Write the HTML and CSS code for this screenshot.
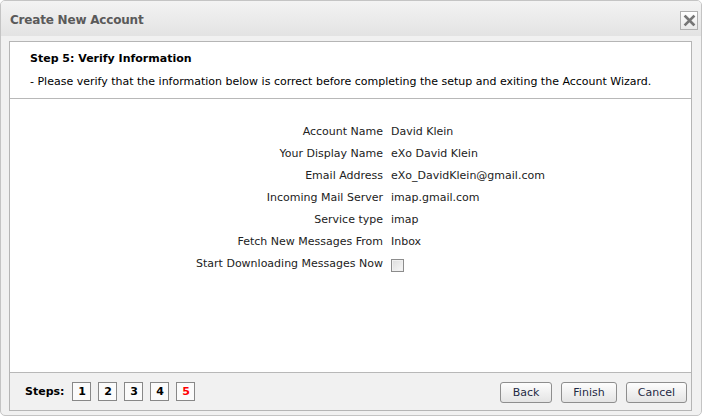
FILE: index.html
```html
<!DOCTYPE html>
<html>
<head>
<meta charset="utf-8">
<link rel="stylesheet" href="styles.css">
</head>
<body>
<div class="window">
  <div class="titlebar">
    <span class="title">Create New Account</span>
    <button class="close" aria-label="Close">
      <svg width="13" height="13" viewBox="0 0 13 13"><path d="M2.5 2.5 L10.5 10.5 M10.5 2.5 L2.5 10.5" stroke="#767676" stroke-width="2.6" stroke-linecap="square"/></svg>
    </button>
  </div>
  <div class="body">
    <div class="panel">
      <div class="head">
        <div class="step-title">Step 5: Verify Information</div>
        <div class="step-desc">- Please verify that the information below is correct before completing the setup and exiting the Account Wizard.</div>
      </div>
      <div class="content">
        <div class="form">
          <div class="lbl">Account Name</div><div class="val">David Klein</div>
          <div class="lbl">Your Display Name</div><div class="val">eXo David Klein</div>
          <div class="lbl">Email Address</div><div class="val">eXo_DavidKlein@gmail.com</div>
          <div class="lbl">Incoming Mail Server</div><div class="val">imap.gmail.com</div>
          <div class="lbl">Service type</div><div class="val">imap</div>
          <div class="lbl">Fetch New Messages From</div><div class="val">Inbox</div>
          <div class="lbl">Start Downloading Messages Now</div><div class="val"><span class="check"></span></div>
        </div>
      </div>
      <div class="footer">
        <div class="steps">
          <span class="steps-label">Steps:</span>
          <span class="step">1</span>
          <span class="step">2</span>
          <span class="step">3</span>
          <span class="step">4</span>
          <span class="step current">5</span>
        </div>
        <div class="buttons">
          <button class="btn btn-back">Back</button>
          <button class="btn btn-finish">Finish</button>
          <button class="btn btn-cancel">Cancel</button>
        </div>
      </div>
    </div>
  </div>
</div>
</body>
</html>
```
FILE: styles.css
```css
html, body {
  margin: 0;
  padding: 0;
  background: #ffffff;
}
body {
  font-family: "DejaVu Sans", Verdana, sans-serif;
  font-size: 11px;
  color: #000;
}
.window {
  width: 700px;
  height: 414px;
  border: 1px solid #c4c4c4;
  border-radius: 5px;
  background: #f1f1f1;
  overflow: hidden;
  display: flex;
  flex-direction: column;
}
.titlebar {
  height: 35px;
  flex: none;
  display: flex;
  align-items: center;
  justify-content: space-between;
  padding: 0 3px 0 9px;
  background: linear-gradient(#f3f3f3, #e3e3e3);
}
.title {
  font-family: "DejaVu Sans", sans-serif;
  font-weight: bold;
  font-size: 12px;
  color: #5a5a5a;
  letter-spacing: -0.2px;
  margin-top: 2px;
}
.close {
  width: 18px;
  height: 19px;
  margin-top: 4px;
  padding: 0;
  border: 1px solid #b0b0b0;
  background: linear-gradient(#ffffff, #e8e8e8);
  display: flex;
  align-items: center;
  justify-content: center;
}
.body {
  flex: 1;
  padding: 5px 9px 4px 8px;
  display: flex;
}
.panel {
  flex: 1;
  border: 1px solid #b5b5b5;
  background: #fff;
  display: flex;
  flex-direction: column;
}
.head {
  padding: 9px 20px 10px 20px;
  border-bottom: 1px solid #b8b8b8;
  height: 37px;
}
.step-title {
  font-weight: bold;
  height: 16px;
  line-height: 16px;
}
.step-desc {
  margin-top: 7px;
  line-height: 16px;
}
.content {
  flex: 1;
  padding-top: 25px;
}
.form {
  display: grid;
  grid-template-columns: 373px auto;
  column-gap: 8px;
  row-gap: 6px;
  line-height: 16px;
}
.lbl {
  text-align: right;
  color: #222;
}
.val {
  color: #222;
}
.check {
  display: inline-block;
  width: 11px;
  height: 11px;
  border: 1px solid #8c8c8c;
  background: linear-gradient(135deg, #dcdcdc, #f8f8f8);
  box-shadow: inset 0 0 0 1px #f0f0f0;
  vertical-align: middle;
  margin-top: 2px;
}
.footer {
  height: 37px;
  border-top: 1px solid #b8b8b8;
  background: #f1f1f1;
  display: flex;
  align-items: center;
  justify-content: space-between;
  padding: 0 4px 0 15px;
}
.steps {
  display: flex;
  align-items: center;
  gap: 7px;
}
.steps-label {
  font-weight: bold;
  margin-right: 1px;
}
.step {
  width: 17px;
  height: 17px;
  border: 1px solid #888;
  background: #fbfbfb;
  font-weight: bold;
  text-align: center;
  line-height: 17px;
}
.step.current {
  color: #f00;
}
.buttons {
  display: flex;
  gap: 9px;
  padding-top: 1px;
}
.btn {
  height: 21px;
  padding: 0;
  font-family: "DejaVu Sans", sans-serif;
  font-size: 11px;
  color: #1f2a44;
  border: 1px solid #8e8e8e;
  border-radius: 3px;
  background: linear-gradient(#fdfdfd, #e4e4e4);
}
.btn-back { width: 52px; }
.btn-finish { width: 56px; }
.btn-cancel { width: 61px; }
```
